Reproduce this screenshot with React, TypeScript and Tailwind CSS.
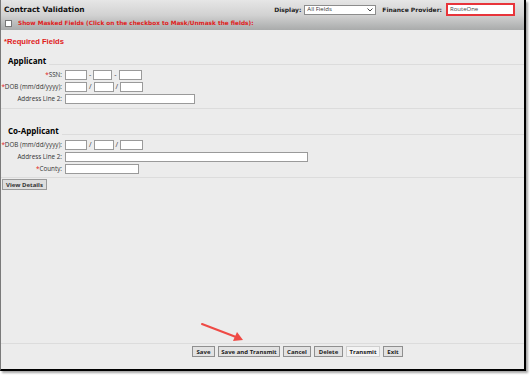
import React from "react";

const Req = () => <span className="text-[#e0201b]">*</span>;

const Box = ({ w }: { w: string }) => (
  <div className={`h-[10px] ${w} bg-white border border-[#9a9a9a]`} />
);

const Row = ({
  label,
  req,
  children,
}: {
  label: string;
  req?: boolean;
  children: React.ReactNode;
}) => (
  <div className="flex items-center h-[12px]">
    <div className="w-[63px] pr-[2px] text-right text-[6.3px] leading-[10px] text-[#333] whitespace-nowrap">
      {req && <Req />}
      {label}
    </div>
    <div className="flex items-center gap-[2px] ml-[1px]">{children}</div>
  </div>
);

const Dob = () => (
  <>
    <Box w="w-[22px]" />
    <span className="text-[7px] text-[#333]">/</span>
    <Box w="w-[20px]" />
    <span className="text-[7px] text-[#333]">/</span>
    <Box w="w-[23px]" />
  </>
);

const Heading = ({ text }: { text: string }) => (
  <div className="flex items-end pl-[7px]">
    <span className="text-[8px] font-bold text-black leading-[10px]">{text}</span>
    <div className="flex-1 h-px bg-[#dcdcdc] ml-[3px] mb-[1px]" />
  </div>
);

const Btn = ({ label, w, light }: { label: string; w: string; light?: boolean }) => (
  <button
    className={`${w} h-[11px] flex items-center justify-center text-[6px] font-bold text-[#222] leading-none border ${
      light ? "bg-[#f4f4f4] border-[#cfcfcf]" : "bg-[#e2e2e2] border-[#8f8f8f]"
    }`}
  >
    {label}
  </button>
);

export default function App() {
  return (
    <div
      className="w-[532px] h-[377px] bg-white relative"
      style={{ fontFamily: '"Open Sans", "DejaVu Sans", sans-serif' }}
    >
      <div className="w-[526px] h-[371px] flex flex-col bg-[#ececec] border-l border-l-[#7a7a7a] border-r-2 border-b-2 border-r-black border-b-black shadow-[2px_2px_2px_rgba(0,0,0,0.35)]">
        {/* header */}
        <div className="h-[30px] bg-gradient-to-b from-[#e6e6e6] via-[#d2d2d2] to-[#a9abab] flex flex-col px-[2px]">
          <div className="flex items-center h-[19px]">
            <span
              className="text-[7.4px] font-bold text-[#111] ml-[1px]"
              style={{ fontFamily: '"DejaVu Sans", sans-serif' }}
            >
              Contract Validation
            </span>
            <div className="flex-1" />
            <span
              className="text-[6px] font-bold text-[#222]"
              style={{ fontFamily: '"DejaVu Sans", sans-serif' }}
            >
              Display:
            </span>
            <div className="ml-[3px] w-[72px] h-[10px] bg-white border border-[#8c8c8c] flex items-center justify-between px-[2px]">
              <span className="text-[6px] text-[#333]">All Fields</span>
              <svg width="6" height="4" viewBox="0 0 6 4">
                <path d="M0.5 0.5 L3 3 L5.5 0.5" fill="none" stroke="#444" strokeWidth="1" />
              </svg>
            </div>
            <span
              className="ml-[6px] text-[6px] font-bold text-[#222]"
              style={{ fontFamily: '"DejaVu Sans", sans-serif' }}
            >
              Finance Provider:
            </span>
            <div className="ml-[4px] mr-[7px] w-[69px] h-[13px] bg-white border-2 border-[#e8343a] flex items-center px-[2px]">
              <span className="text-[6px] text-[#444]">RouteOne</span>
            </div>
          </div>
          <div className="flex items-center h-[9px] ml-[2px]">
            <div className="w-[7px] h-[7px] bg-white border border-[#777]" />
            <span
              className="ml-[6px] text-[5.8px] font-bold text-[#e0201b]"
              style={{ fontFamily: '"DejaVu Sans", sans-serif' }}
            >
              Show Masked Fields (Click on the checkbox to Mask/Unmask the fields):
            </span>
          </div>
        </div>

        {/* body */}
        <div className="flex-1 flex flex-col">
          <div
            className="pl-[3px] pt-[7px] text-[7.6px] font-bold text-[#e0201b] leading-[10px]"
            style={{ fontFamily: '"Liberation Sans", sans-serif' }}
          >
            *Required Fields
          </div>
          <div className="mt-[9px]">
            <Heading text="Applicant" />
          </div>
          <div className="mt-[3px] flex flex-col">
            <Row label="SSN:" req>
              <Box w="w-[22px]" />
              <span className="text-[7px] text-[#333]">-</span>
              <Box w="w-[19px]" />
              <span className="text-[7px] text-[#333]">-</span>
              <Box w="w-[23px]" />
            </Row>
            <Row label="DOB (mm/dd/yyyy):" req>
              <Dob />
            </Row>
            <Row label="Address Line 2:">
              <Box w="w-[130px]" />
            </Row>
          </div>
          <div className="mt-[3px] h-px bg-[#dcdcdc]" />
          <div className="mt-[17px]">
            <Heading text="Co-Applicant" />
          </div>
          <div className="mt-[3px] flex flex-col">
            <Row label="DOB (mm/dd/yyyy):" req>
              <Dob />
            </Row>
            <Row label="Address Line 2:">
              <Box w="w-[243px]" />
            </Row>
            <Row label="County:" req>
              <Box w="w-[74px]" />
            </Row>
          </div>
          <div className="mt-[2px] h-px bg-[#dcdcdc]" />
          <div className="flex pl-[1px] pt-px">
            <button className="w-[45px] h-[11px] flex items-center justify-center text-[6px] font-bold text-[#333] bg-[#dedede] border border-[#9a9a9a] leading-none">
              View Details
            </button>
          </div>
          <div className="flex-1" />
          <div className="h-px bg-[#dcdcdc]" />
          <div className="h-[25px] flex gap-[3px] pt-[2px] pl-[191px]">
            <Btn label="Save" w="w-[23px]" />
            <Btn label="Save and Transmit" w="w-[62px]" />
            <Btn label="Cancel" w="w-[28px]" />
            <Btn label="Delete" w="w-[29px]" />
            <Btn label="Transmit" w="w-[34px]" light />
            <Btn label="Exit" w="w-[20px]" />
          </div>
        </div>
      </div>

      {/* annotation arrow */}
      <svg className="absolute left-0 top-0" width="532" height="377" viewBox="0 0 532 377">
        <line x1="202" y1="324" x2="236" y2="337" stroke="#ef4a45" strokeWidth="2" strokeLinecap="round" />
        <path d="M243 340 L233 341 L237 332 Z" fill="#ef4a45" />
      </svg>
    </div>
  );
}
